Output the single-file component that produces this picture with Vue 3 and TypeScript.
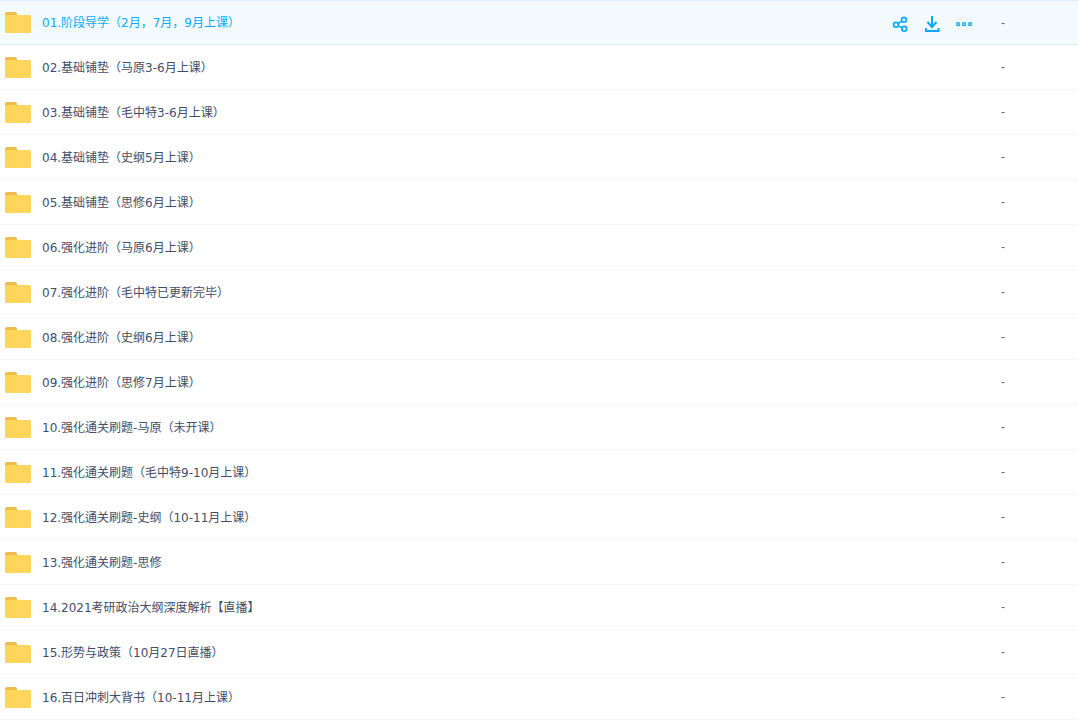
<template>
  <div class="file-list">
    <div
      v-for="(name, i) in files"
      :key="name"
      class="file-row"
      :class="{ active: i === 0 }"
    >
      <svg class="folder" width="26" height="21" viewBox="0 0 26 21">
        <path d="M0 2a2 2 0 0 1 2-2h8a2 2 0 0 1 2 1.500V5H0z" fill="#eebc4b" />
        <path d="M0 4.500A1.500 1.500 0 0 1 1.500 3h23A1.500 1.500 0 0 1 26 4.500v15a1.500 1.500 0 0 1-1.500 1.500h-23A1.500 1.500 0 0 1 0 19.500z" fill="#ffd659" />
      </svg>
      <span class="file-name">{{ name }}</span>
      <div v-if="i === 0" class="actions">
        <svg width="16" height="16" viewBox="0 0 16 16" fill="none" stroke="#09aaff" stroke-width="1.700">
          <circle cx="4" cy="8.700" r="2.400" />
          <circle cx="12" cy="3.700" r="2.400" />
          <circle cx="12.300" cy="12.700" r="2.400" />
          <path d="M6 7.400l4-2.400M6 10l4.300 1.500" />
        </svg>
        <svg width="16" height="16" viewBox="0 0 16 16" fill="none" stroke="#09aaff" stroke-width="2">
          <path d="M8 0v11.500M3.500 6l4.500 5 4.500-5M2 12v3h12.500v-3" />
        </svg>
        <svg width="16" height="16" viewBox="0 0 16 16" fill="none" stroke="#09aaff" stroke-width="1.300">
          <rect x="0.700" y="6.700" width="2.800" height="2.800" rx="1" />
          <rect x="6.700" y="6.700" width="2.800" height="2.800" rx="1" />
          <rect x="12.700" y="6.700" width="2.800" height="2.800" rx="1" />
        </svg>
      </div>
      <span class="file-size">-</span>
    </div>
  </div>
</template>

<script setup lang="ts">
const files: string[] = [
  '01.阶段导学（2月，7月，9月上课）',
  '02.基础铺垫（马原3-6月上课）',
  '03.基础铺垫（毛中特3-6月上课）',
  '04.基础铺垫（史纲5月上课）',
  '05.基础铺垫（思修6月上课）',
  '06.强化进阶（马原6月上课）',
  '07.强化进阶（毛中特已更新完毕）',
  '08.强化进阶（史纲6月上课）',
  '09.强化进阶（思修7月上课）',
  '10.强化通关刷题-马原（未开课）',
  '11.强化通关刷题（毛中特9-10月上课）',
  '12.强化通关刷题-史纲（10-11月上课）',
  '13.强化通关刷题-思修',
  '14.2021考研政治大纲深度解析【直播】',
  '15.形势与政策（10月27日直播）',
  '16.百日冲刺大背书（10-11月上课）',
]
</script>

<style scoped>
.file-list {
  width: 1078px;
  height: 720px;
  overflow: hidden;
  font-family: "DejaVu Sans", "Noto Sans CJK KR", sans-serif;
  font-size: 12px;
  color: #424e67;
}

.file-row {
  height: 44px;
  border-bottom: 1px solid #f2f6fd;
  display: flex;
  align-items: center;
  position: relative;
}

.file-row.active {
  background: #f4fbff;
  color: #09aaff;
  border-top: 1px solid #dcecfe;
  border-bottom-color: #dcecfe;
  height: 43px;
}

.folder {
  margin: 1px 0 0 5px;
  flex: none;
}

.active .folder {
  margin-top: 0;
}

.file-name {
  flex: 1;
  margin: -2px 0 0 11px;
}

.actions {
  position: absolute;
  left: 892px;
  top: 15px;
  display: flex;
  gap: 16px;
}

.file-size {
  width: 77px;
  font-family: "Liberation Sans", sans-serif;
  color: #666;
}
</style>
